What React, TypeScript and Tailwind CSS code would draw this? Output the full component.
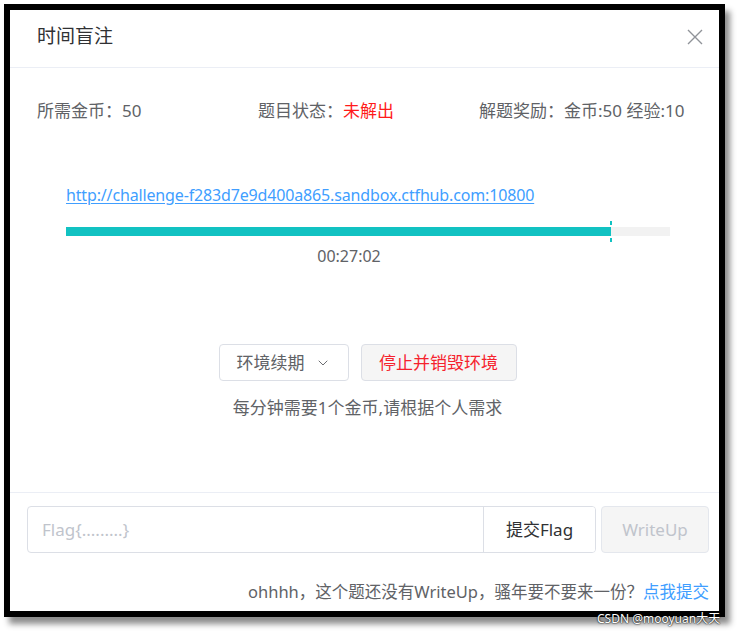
import { ChevronDown } from "lucide-react";

const font = { fontFamily: '"Noto Sans", "Noto Sans CJK SC", sans-serif' };

function CloseIcon() {
  return (
    <svg width="16" height="16" viewBox="0 0 16 16" className="text-[#909399]">
      <path d="M1 1L15 15M15 1L1 15" stroke="currentColor" strokeWidth="1.4" fill="none" />
    </svg>
  );
}

export default function App() {
  const url = "http://challenge-f283d7e9d400a865.sandbox.ctfhub.com:10800";
  const progress = 545 / 604;

  return (
    <div className="relative w-[738px] h-[631px] bg-white" style={font}>
      <div className="ml-[4px] pt-[4px]">
        <div className="w-[721px] h-[613px] border-[6px] border-black bg-white shadow-[5px_7px_6px_rgba(0,0,0,0.45)] flex flex-col">
          {/* header */}
          <div className="h-[58px] flex items-center justify-between pl-[27px] pr-[16px] pb-[4px] border-b border-[#ebeef5]">
            <span className="text-[19px] text-[#303133]">时间盲注</span>
            <CloseIcon />
          </div>

          {/* body */}
          <div className="h-[425px] flex flex-col border-b border-[#ebeef5]">
            <div className="grid grid-cols-3 pl-[27px] pr-[19px] pt-[32px] text-[17px] leading-[22px] text-[#606266]">
              <span>所需金币：50</span>
              <span>
                题目状态：<span className="text-[#ff1a1a]">未解出</span>
              </span>
              <span>解题奖励：金币:50 经验:10</span>
            </div>

            <div className="pl-[56px] mt-[62px] h-[22px] leading-[22px] text-[16px] tracking-[-0.15px]">
              <a href="#" className="text-[#409eff] underline underline-offset-2">
                {url}
              </a>
            </div>

            <div className="ml-[56px] mt-[21px] w-[604px] h-[9px] bg-[#f2f2f2] relative">
              <div className="h-full bg-[#12c2c2]" style={{ width: `${progress * 100}%` }} />
              <div className="absolute left-[544px] top-[-6px] w-[2px] h-[4px] bg-[#12c2c2]" />
              <div className="absolute left-[544px] top-[11px] w-[2px] h-[4px] bg-[#12c2c2]" />
            </div>

            <div className="ml-[56px] w-[566px] mt-[9px] text-center text-[16px] leading-[22px] text-[#606266]">
              00:27:02
            </div>

            <div className="mt-[77px] pl-[6px] flex justify-center gap-[12px]">
              <button className="w-[130px] h-[37px] rounded-[4px] border border-[#dcdfe6] bg-white text-[17px] text-[#606266] flex items-center justify-center gap-[10px]">
                环境续期
                <ChevronDown size={16} strokeWidth={1.4} />
              </button>
              <button className="w-[156px] h-[37px] rounded-[4px] border border-[#dcdfe6] bg-[#f5f5f5] text-[17px] text-[#f5222d]">
                停止并销毁环境
              </button>
            </div>

            <div className="mt-[16px] pl-[6px] text-center text-[17px] leading-[22px] text-[#606266]">
              每分钟需要1个金币,请根据个人需求
            </div>
          </div>

          {/* footer */}
          <div className="flex-1 pl-[17px] pr-[10px] pt-[13px]">
            <div className="flex h-[47px] gap-[5px]">
              <div className="flex flex-1 rounded-[4px] border border-[#dcdfe6] overflow-hidden">
                <input
                  className="flex-1 px-[14px] text-[17px] text-[#606266] outline-none placeholder:text-[#c0c4cc]"
                  placeholder="Flag{.........}"
                  style={font}
                />
                <button className="w-[112px] border-l border-[#dcdfe6] bg-white text-[17px] text-[#303133]">
                  提交Flag
                </button>
              </div>
              <button className="w-[108px] rounded-[4px] border border-[#e4e7ed] bg-[#f5f5f5] text-[17px] text-[#c0c4cc]">
                WriteUp
              </button>
            </div>
            <div className="mt-[28px] text-right text-[16.5px] leading-[22px] text-[#606266]">
              ohhhh，这个题还没有WriteUp，骚年要不要来一份？
              <span className="text-[#409eff]">点我提交</span>
            </div>
          </div>
        </div>
      </div>

      <div className="absolute left-[597px] top-[610px] text-[12px] text-white [text-shadow:0_0_2px_#000,0_0_1px_#000]">
        CSDN @mooyuan大天
      </div>
    </div>
  );
}
